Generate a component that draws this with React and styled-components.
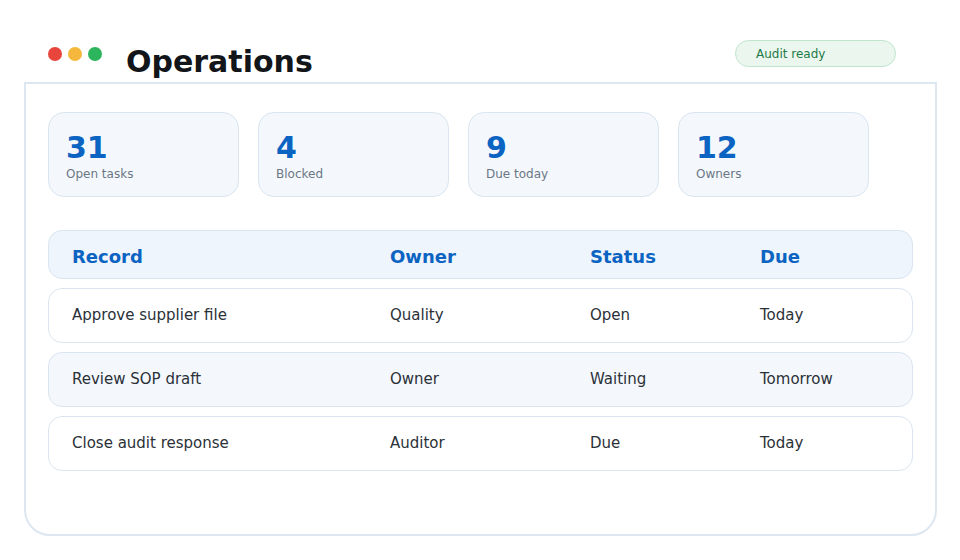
import React from 'react'
import styled, { createGlobalStyle } from 'styled-components'

const GlobalStyle = createGlobalStyle`
  html, body {
    margin: 0;
    padding: 0;
    background: #ffffff;
    font-family: "DejaVu Sans", "Noto Sans", sans-serif;
  }
`

const Page = styled.div`
  width: 960px;
  height: 560px;
  overflow: hidden;
  box-sizing: border-box;
`

const TopBar = styled.div`
  display: flex;
  align-items: flex-start;
  height: 42px;
  padding: 40px 64px 0 48px;
`

const Dots = styled.div`
  display: flex;
  gap: 6px;
  margin-top: 7px;
`

const Dot = styled.span`
  width: 14px;
  height: 14px;
  border-radius: 50%;
  background: ${p => p.color};
`

const Title = styled.h1`
  margin: 4px 0 0 24px;
  font-size: 30px;
  line-height: 36px;
  font-weight: 700;
  color: #121519;
`

const Badge = styled.div`
  margin-left: auto;
  width: 161px;
  height: 27px;
  box-sizing: border-box;
  padding-left: 20px;
  display: flex;
  align-items: center;
  border: 1px solid #bfe5cc;
  border-radius: 14px;
  background: #ebf6ef;
  color: #1e7b46;
  font-size: 12px;
`

const Panel = styled.section`
  margin: 0 23px 0 24px;
  height: 454px;
  box-sizing: border-box;
  border: 2px solid #dce7f1;
  border-radius: 0 0 26px 26px;
  padding: 28px 22px;
`

const Stats = styled.div`
  display: grid;
  grid-template-columns: repeat(4, 191px);
  gap: 19px;
`

const StatCard = styled.div`
  height: 85px;
  box-sizing: border-box;
  padding: 17px 17px 0;
  border: 1px solid #d9e5f0;
  border-radius: 16px;
  background: #f4f8fc;
`

const StatValue = styled.div`
  font-size: 30px;
  line-height: 36px;
  font-weight: 700;
  color: #0b63c2;
`

const StatLabel = styled.div`
  font-size: 12px;
  line-height: 16px;
  color: #6b7785;
`

const Table = styled.div`
  margin-top: 33px;
  display: flex;
  flex-direction: column;
  gap: 9px;
`

const Row = styled.div`
  display: grid;
  grid-template-columns: 318px 200px 170px 1fr;
  align-items: center;
  height: ${p => (p.head ? 49 : 55)}px;
  box-sizing: border-box;
  padding: ${p => (p.head ? '3px 23px 0' : '0 23px 2px')};
  border: 1px solid #d9e5f0;
  border-radius: 14px;
  background: ${p => (p.head ? '#eef5fd' : p.alt ? '#f4f8fc' : '#ffffff')};
  color: ${p => (p.head ? '#0b63c2' : '#2b3138')};
  font-size: ${p => (p.head ? 18 : 15)}px;
  font-weight: ${p => (p.head ? 700 : 400)};
`

const stats = [
  ['31', 'Open tasks'],
  ['4', 'Blocked'],
  ['9', 'Due today'],
  ['12', 'Owners']
]

const rows = [
  ['Approve supplier file', 'Quality', 'Open', 'Today'],
  ['Review SOP draft', 'Owner', 'Waiting', 'Tomorrow'],
  ['Close audit response', 'Auditor', 'Due', 'Today']
]

export default function App () {
  return (
    <Page>
      <GlobalStyle />
      <TopBar>
        <Dots>
          <Dot color="#e8453c" />
          <Dot color="#f5b83d" />
          <Dot color="#2db55d" />
        </Dots>
        <Title>Operations</Title>
        <Badge>Audit ready</Badge>
      </TopBar>
      <Panel>
        <Stats>
          {stats.map(([value, label]) => (
            <StatCard key={label}>
              <StatValue>{value}</StatValue>
              <StatLabel>{label}</StatLabel>
            </StatCard>
          ))}
        </Stats>
        <Table>
          <Row head>
            <span>Record</span>
            <span>Owner</span>
            <span>Status</span>
            <span>Due</span>
          </Row>
          {rows.map((r, i) => (
            <Row key={r[0]} alt={i % 2 === 1}>
              {r.map(c => <span key={c}>{c}</span>)}
            </Row>
          ))}
        </Table>
      </Panel>
    </Page>
  )
}
